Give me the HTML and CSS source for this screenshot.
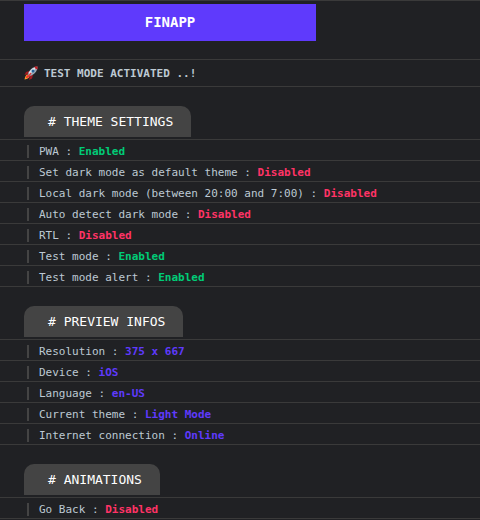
FILE: index.html
```html
<!DOCTYPE html>
<html lang="en">
<head>
<meta charset="utf-8">
<title>Console</title>
<link rel="stylesheet" href="styles.css">
</head>
<body>
<main class="console">
  <header class="entry entry-banner"><h1 class="banner">FINAPP</h1></header>
  <p class="entry notice">
    <svg class="rocket" viewBox="0 0 28 28" aria-hidden="true">
      <path fill="#a11a20" d="M10 10 4 12 1 18l8-2zM18 18l-2 7-6 3 2-9z"/>
      <path fill="#ffb02e" d="M8 17c-4 0-6 4-7 10 6-1 10-3 10-7z"/>
      <path fill="#f8312f" d="M8 18c-3 1-4 3-5 7 4-1 6-2 7-5z"/>
      <path fill="#9eaab5" d="M27 1c-8 0-14 4-18 12l-1 4 3 3 4-1C23 15 27 9 27 1z"/>
      <path fill="#dce6ee" d="M25 2c-7 1-12 5-16 12l2 2C17 12 21 8 25 2z"/>
      <path fill="#c92027" d="M27 1h-6c0 3 2 5 6 6z"/>
      <circle cx="18" cy="10" r="3" fill="#29639b"/>
      <path fill="#e6363a" d="m13 13 2 2-6 8-2-2z"/>
    </svg>
    <strong>TEST MODE ACTIVATED ..!</strong>
  </p>

  <section>
    <div class="entry entry-title"><h2 class="title"># THEME SETTINGS</h2></div>
    <ul class="list">
      <li class="entry item"><span class="text">PWA : <b class="on">Enabled</b></span></li>
      <li class="entry item"><span class="text">Set dark mode as default theme : <b class="off">Disabled</b></span></li>
      <li class="entry item"><span class="text">Local dark mode (between 20:00 and 7:00) : <b class="off">Disabled</b></span></li>
      <li class="entry item"><span class="text">Auto detect dark mode : <b class="off">Disabled</b></span></li>
      <li class="entry item"><span class="text">RTL : <b class="off">Disabled</b></span></li>
      <li class="entry item"><span class="text">Test mode : <b class="on">Enabled</b></span></li>
      <li class="entry item"><span class="text">Test mode alert : <b class="on">Enabled</b></span></li>
    </ul>
  </section>

  <section>
    <div class="entry entry-title"><h2 class="title"># PREVIEW INFOS</h2></div>
    <ul class="list">
      <li class="entry item"><span class="text">Resolution : <b class="info">375 x 667</b></span></li>
      <li class="entry item"><span class="text">Device : <b class="info">iOS</b></span></li>
      <li class="entry item"><span class="text">Language : <b class="info">en-US</b></span></li>
      <li class="entry item"><span class="text">Current theme : <b class="info">Light Mode</b></span></li>
      <li class="entry item"><span class="text">Internet connection : <b class="info">Online</b></span></li>
    </ul>
  </section>

  <section>
    <div class="entry entry-title"><h2 class="title"># ANIMATIONS</h2></div>
    <ul class="list">
      <li class="entry item"><span class="text">Go Back : <b class="off">Disabled</b></span></li>
    </ul>
  </section>
</main>
</body>
</html>
```

FILE: styles.css
```css
* {
  box-sizing: border-box;
  margin: 0;
  padding: 0;
}

body {
  background: #202124;
  color: #bdc9d3;
  font: 11px/13px "DejaVu Sans Mono", "Liberation Mono", monospace;
}

.console {
  border-bottom: 1px solid #3a3a3a;
}

.entry {
  border-top: 1px solid #3a3a3a;
  padding-left: 24px;
}

.entry-banner {
  padding-top: 3px;
  padding-bottom: 18px;
}

.banner {
  width: 292px;
  max-width: 100%;
  padding: 8px 0 9px;
  background: #5f3afc;
  color: #fff;
  font-size: 14px;
  line-height: 20px;
  text-align: center;
}

.notice {
  display: flex;
  align-items: center;
  gap: 6px;
  height: 27px;
}

.rocket {
  width: 14px;
  height: 14px;
}

.entry-title {
  display: flex;
  padding-top: 19px;
  padding-bottom: 2px;
}

.title {
  padding: 6px 18px 5px 24px;
  border-radius: 10px 10px 0 0;
  background: #444;
  color: #fff;
  font-size: 13px;
  font-weight: 400;
  line-height: 20px;
}

.list {
  list-style: none;
}

.item {
  padding: 5px 0 2px 27px;
}

.text {
  display: block;
  padding-left: 10px;
  border-left: 2px solid #444;
}

.on {
  color: #00cc77;
}

.off {
  color: #ff3366;
}

.info {
  color: #5f3afc;
}
```
